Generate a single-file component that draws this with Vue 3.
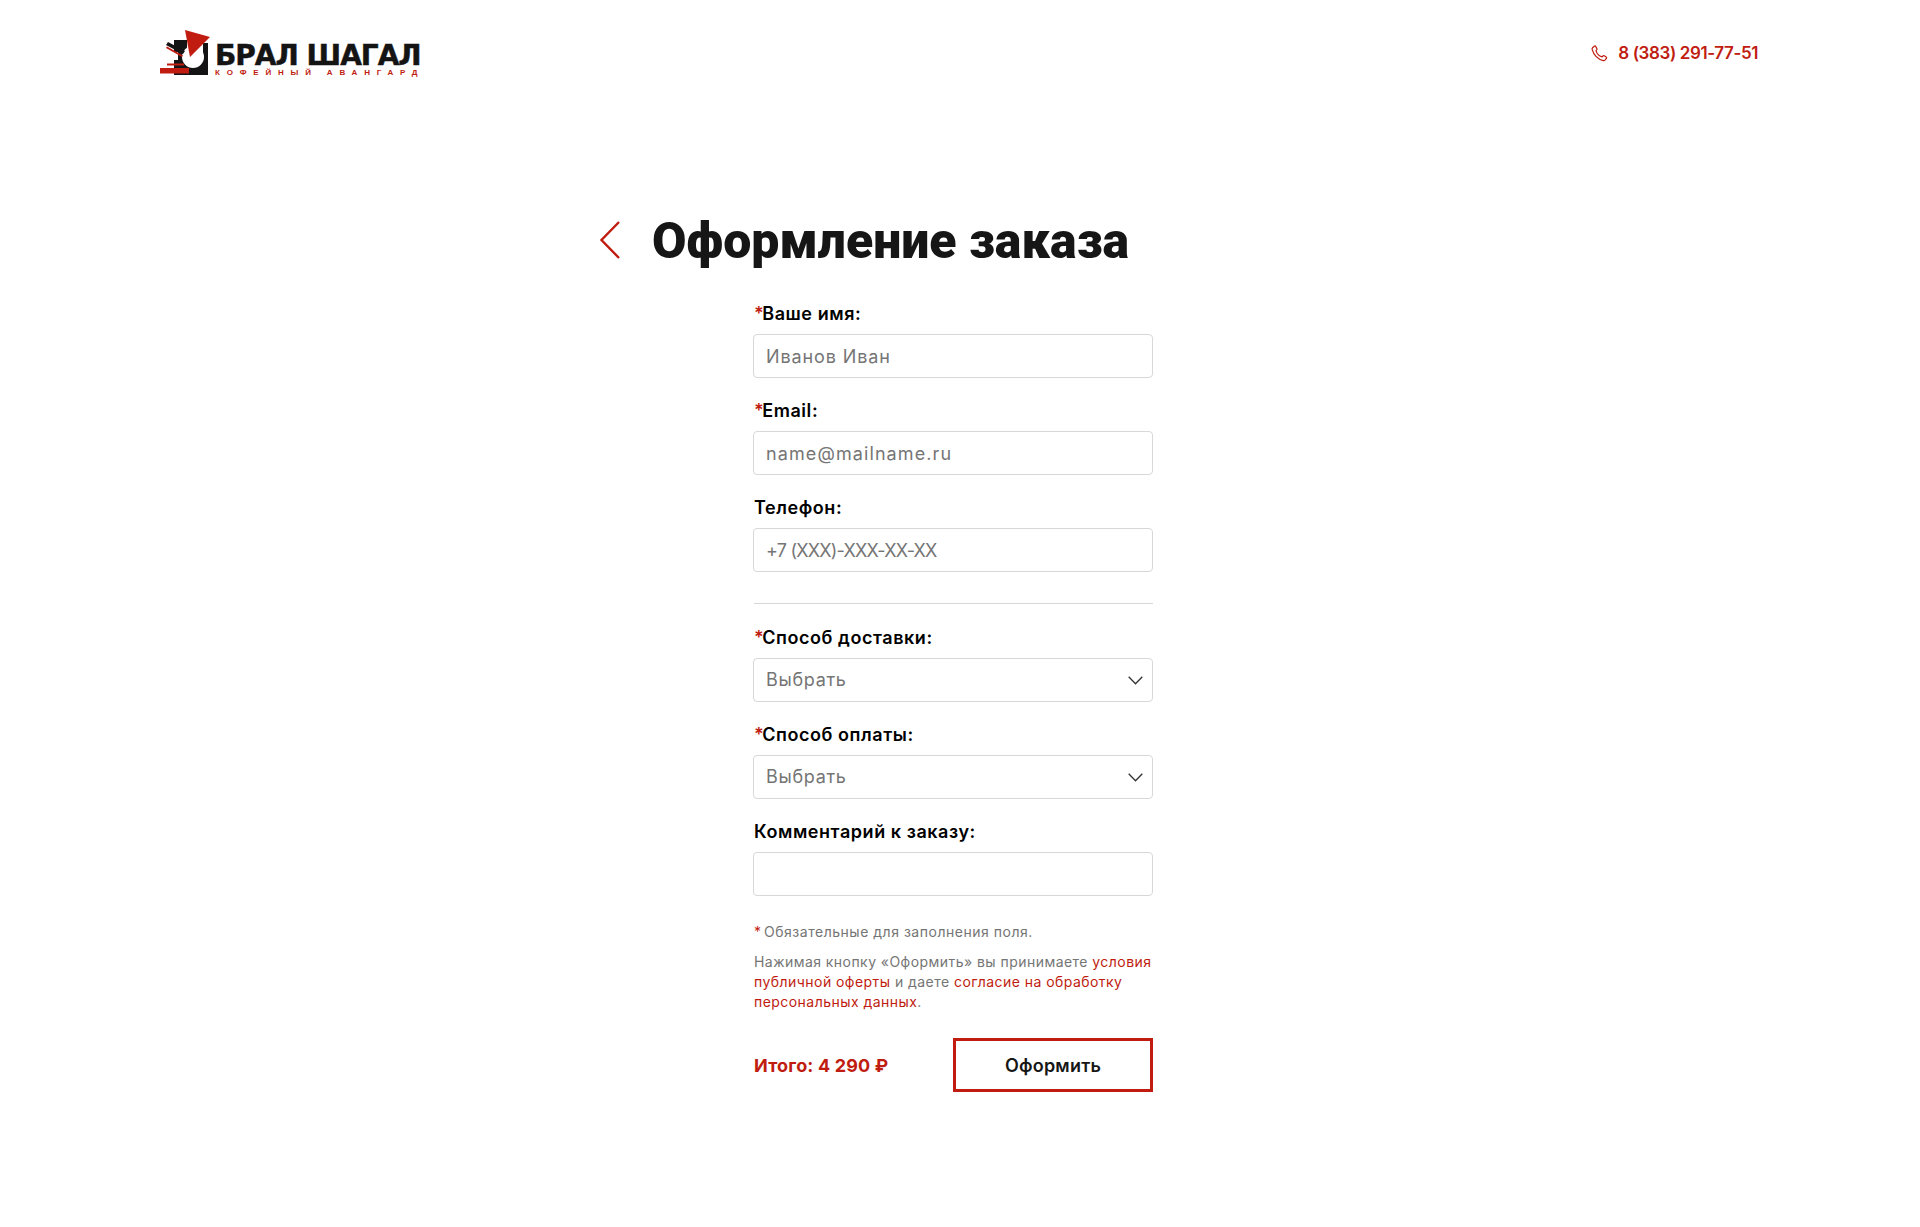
<script setup>
const top = [
  { label: 'Ваше имя:', req: true, ph: 'Иванов Иван' },
  { label: 'Email:', req: true, ph: 'name@mailname.ru', wide: true },
  { label: 'Телефон:', req: false, ph: '+7 (XXX)-XXX-XX-XX', tight: true },
]
const selects = [
  { label: 'Способ доставки:' },
  { label: 'Способ оплаты:' },
]
</script>

<template>
  <div class="page">
    <header class="header">
      <a class="logo">
        <svg class="logo-mark" width="52" height="48" viewBox="0 0 52 48">
          <path fill="#141414" d="M14 10h13v12h-1v10h-8V22h-4z"/>
          <path fill="#141414" d="M14 30h29V13h5v32H14z"/>
          <circle cx="33" cy="27" r="11" fill="#fff"/>
          <path fill="#141414" d="M6 15l2-3 17 9-2 3z"/>
          <path fill="#c01c10" d="M25 0l25 7-20 20z"/>
          <path fill="#c01c10" d="M0 38h29v5.500H0z"/>
          <path fill="#c01c10" d="M7 33.500h17v2H7z"/>
          <path fill="#c01c10" d="M6 18l1-1.500 16 9-1 1.500z"/>
        </svg>
        <span class="logo-text">
          <span class="logo-name">БРАЛ ШАГАЛ</span>
          <span class="logo-tag">КОФЕЙНЫЙ АВАНГАРД</span>
        </span>
      </a>
      <a class="phone">
        <svg width="17" height="17" viewBox="0 0 17 17" fill="none" stroke="#c01c10" stroke-width="1.200" stroke-linejoin="round">
          <path d="M1.500 2.800 3.300 1.200c.5-.4 1-.3 1.300.2l1.300 2.200c.3.500.2.900-.2 1.300L5 5.600c.7 2.600 3.400 5.500 6.100 6.300l.8-.9c.4-.4.800-.5 1.300-.2l2 1.300c.5.300.6.800.2 1.300l-1.500 1.800c-.5.500-1 .6-1.700.4C6.600 14 2.800 10 1.200 4.600c-.2-.7-.1-1.300.3-1.800z"/>
        </svg>
        <span>8 (383) 291-77-51</span>
      </a>
    </header>

    <main class="main">
      <div class="title-row">
        <svg class="back" width="22" height="38" viewBox="0 0 22 38" fill="none" stroke="#c01c10" stroke-width="2.400">
          <path d="M20 1 2.500 19 20 37"/>
        </svg>
        <h1 class="title">Оформление заказа</h1>
      </div>

      <form class="form" @submit.prevent>
        <div v-for="f in top" :key="f.label" class="field">
          <label class="label"><span v-if="f.req" class="star">*</span>{{ f.label }}</label>
          <input class="control" :class="{ tight: f.tight, wide: f.wide }" :placeholder="f.ph" />
        </div>

        <div class="divider"></div>

        <div v-for="s in selects" :key="s.label" class="field">
          <label class="label"><span class="star">*</span>{{ s.label }}</label>
          <div class="select-wrap">
            <div class="control select">Выбрать</div>
            <svg class="chev" width="15" height="9" viewBox="0 0 15 9" fill="none" stroke="#333" stroke-width="1.300">
              <path d="M.7.800 7.500 7.800 14.300.800"/>
            </svg>
          </div>
        </div>

        <div class="field">
          <label class="label">Комментарий к заказу:</label>
          <input class="control" />
        </div>

        <p class="note"><span class="star">*</span> Обязательные для заполнения поля.</p>
        <p class="legal">Нажимая кнопку «Оформить» вы принимаете <a>условия публичной оферты</a> и даете <a>согласие на обработку персональных данных</a>.</p>

        <div class="submit-row">
          <div class="total">Итого: 4 290 ₽</div>
          <button class="submit" type="submit">Оформить</button>
        </div>
      </form>
    </main>
  </div>
</template>

<style scoped>
.page {
  min-height: 1227px;
  background: #fff;
  font-family: "Inter", "Noto Sans", sans-serif;
  color: #000;
}
.header {
  display: flex;
  justify-content: space-between;
  align-items: flex-start;
  padding: 30px 162px 0 160px;
}
.logo {
  display: flex;
  gap: 3px;
}
.logo-text {
  display: flex;
  flex-direction: column;
  padding-top: 14px;
}
.logo-name {
  font-family: "DejaVu Sans", sans-serif;
  font-weight: 700;
  font-size: 28px;
  line-height: 24px;
  letter-spacing: -1px;
  -webkit-text-stroke: .5px #141414;
  color: #141414;
  white-space: nowrap;
}
.logo-tag {
  font-family: "Liberation Sans", sans-serif;
  font-weight: 700;
  font-size: 8px;
  line-height: 10px;
  letter-spacing: 6.800px;
  color: #c01c10;
  white-space: nowrap;
}
.phone {
  display: flex;
  align-items: center;
  gap: 10px;
  padding-top: 11px;
  font-size: 17px;
  font-weight: 600;
  line-height: 24px;
  letter-spacing: -.4px;
  color: #c01c10;
}
.main {
  padding: 132px 0 0 599px;
}
.title-row {
  display: flex;
  align-items: center;
  gap: 31px;
  height: 60px;
}
.title {
  margin: 2px 0 0;
  font-family: "Roboto", sans-serif;
  font-weight: 900;
  font-size: 50px;
  line-height: 60px;
  color: #161616;
}
.form {
  width: 400px;
  margin: 32px 0 0 154px;
}
.field {
  margin-bottom: 21px;
}
.label {
  display: block;
  padding-left: 1px;
  font-size: 18px;
  font-weight: 600;
  line-height: 23px;
  margin-bottom: 9px;
  letter-spacing: .55px;
}
.star {
  color: #c01c10;
  margin-right: -2px;
}
.control {
  display: block;
  box-sizing: border-box;
  width: 100%;
  height: 44px;
  padding: 0 12px;
  border: 1px solid #d8d8d8;
  border-radius: 4px;
  background: #fff;
  font-family: inherit;
  font-size: 18px;
  line-height: 42px;
  letter-spacing: .9px;
  color: #757575;
  outline: none;
}
.control.select {
  letter-spacing: .7px;
}
.control.tight {
  letter-spacing: -.77px;
}
.control.wide {
  letter-spacing: 1.1px;
}
.control::placeholder {
  color: #757575;
}
.select-wrap {
  position: relative;
}
.chev {
  position: absolute;
  right: 10px;
  top: 18px;
}
.divider {
  height: 1px;
  background: #d8d8d8;
  margin: 31px 0 22px 1px;
}
.note, .legal {
  margin: 0;
  padding-left: 1px;
  font-size: 14px;
  letter-spacing: .45px;
  color: #757575;
}
.note {
  margin-top: 26px;
  line-height: 20px;
  letter-spacing: .52px;
}
.legal {
  margin-top: 10px;
  line-height: 20px;
}
.legal a {
  color: #c01c10;
}
.submit-row {
  display: flex;
  justify-content: space-between;
  align-items: center;
  margin-top: 26px;
  padding-left: 1px;
}
.total {
  font-size: 18px;
  font-weight: 700;
  letter-spacing: .17px;
  color: #c01c10;
}
.submit {
  width: 200px;
  height: 54px;
  background: #fff;
  border: 3px solid #c01c10;
  font-family: inherit;
  font-size: 18px;
  font-weight: 600;
  letter-spacing: .2px;
  color: #161616;
}
</style>
